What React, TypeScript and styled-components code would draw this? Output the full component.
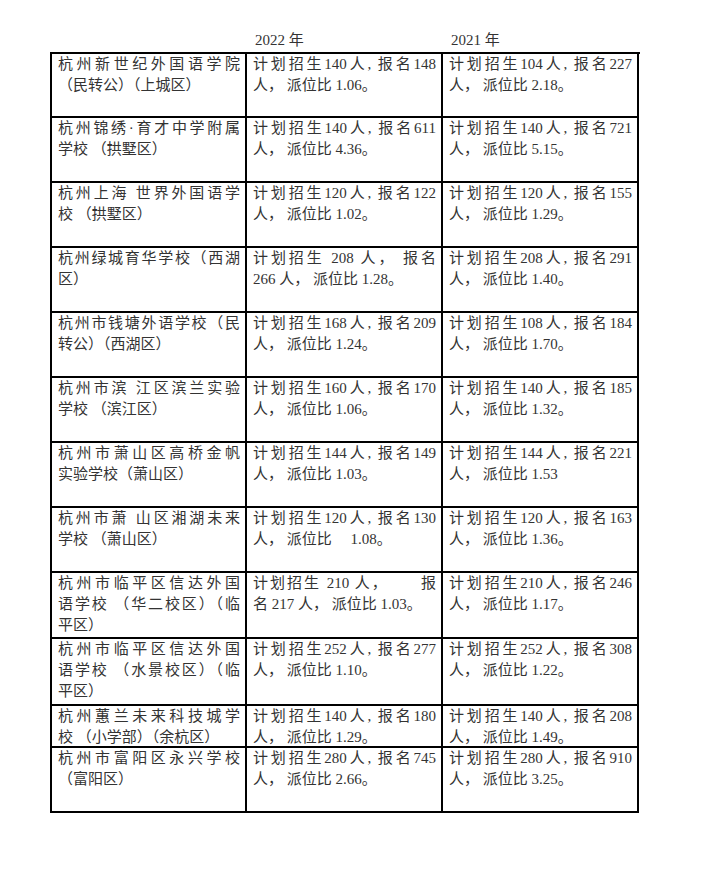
import styled, { createGlobalStyle } from 'styled-components'

const GlobalStyle = createGlobalStyle`
  html, body {
    margin: 0;
    padding: 0;
    background: #FFF;
  }

  body {
    color: #333;
    font-family: "Liberation Serif", "Noto Sans CJK SC", serif;
  }
`

const Page = styled.main`
  padding: 29px 0 0 50px;
  width: 590px;
`

const HeaderRow = styled.div`
  display: grid;
  grid-template-columns: 195px 196px 196px;
  height: 23px;
`

const HeaderCell = styled.div`
  font-size: 15px;
  line-height: 23px;
  padding-left: 10px;
`

const Grid = styled.div`
  border-left: 2px solid #000;
  border-top: 2px solid #000;
  display: grid;
  grid-template-columns: 195px 196px 196px;
`

const Cell = styled.div<{ $h: number }>`
  border-bottom: 2px solid #000;
  border-right: 2px solid #000;
  box-sizing: border-box;
  font-size: 15px;
  height: ${p => p.$h}px;
  line-height: 21px;
  overflow: hidden;
  padding: 0 5px 0 6px;
`

const Line = styled.div<{ $full?: boolean }>`
  text-align: ${p => (p.$full ? 'justify' : 'left')};
  text-align-last: ${p => (p.$full ? 'justify' : 'left')};
  white-space: nowrap;
`

type Row = {
  h: number
  cells: string[][]
}

const rows: Row[] = [
  {
    h: 64,
    cells: [
      ['杭州新世纪外国语学院', '（民转公）（上城区）'],
      ['计划招生140人, 报名148', '人， 派位比 1.06。'],
      ['计划招生104人, 报名227', '人， 派位比 2.18。']
    ]
  },
  {
    h: 65,
    cells: [
      ['杭州锦绣·育才中学附属', '学校 （拱墅区）'],
      ['计划招生140人, 报名611', '人， 派位比 4.36。'],
      ['计划招生140人, 报名721', '人， 派位比 5.15。']
    ]
  },
  {
    h: 65,
    cells: [
      ['杭州上海 世界外国语学', '校 （拱墅区）'],
      ['计划招生120人, 报名122', '人， 派位比 1.02。'],
      ['计划招生120人, 报名155', '人， 派位比 1.29。']
    ]
  },
  {
    h: 65,
    cells: [
      ['杭州绿城育华学校（西湖', '区）'],
      ['计划招生 208 人， 报名', '266 人， 派位比 1.28。'],
      ['计划招生208人, 报名291', '人， 派位比 1.40。']
    ]
  },
  {
    h: 65,
    cells: [
      ['杭州市钱塘外语学校（民', '转公）（西湖区）'],
      ['计划招生168人, 报名209', '人， 派位比 1.24。'],
      ['计划招生108人, 报名184', '人， 派位比 1.70。']
    ]
  },
  {
    h: 65,
    cells: [
      ['杭州市滨 江区滨兰实验', '学校 （滨江区）'],
      ['计划招生160人, 报名170', '人， 派位比 1.06。'],
      ['计划招生140人, 报名185', '人， 派位比 1.32。']
    ]
  },
  {
    h: 65,
    cells: [
      ['杭州市萧山区高桥金帆', '实验学校（萧山区）'],
      ['计划招生144人, 报名149', '人， 派位比 1.03。'],
      ['计划招生144人, 报名221', '人， 派位比 1.53']
    ]
  },
  {
    h: 65,
    cells: [
      ['杭州市萧 山区湘湖未来', '学校 （萧山区）'],
      ['计划招生120人, 报名130', '人， 派位比　 1.08。'],
      ['计划招生120人, 报名163', '人， 派位比 1.36。']
    ]
  },
  {
    h: 66,
    cells: [
      ['杭州市临平区信达外国', '语学校 （华二校区）（临', '平区）'],
      ['计划招生 210 人，　　 报', '名 217 人， 派位比 1.03。'],
      ['计划招生210人, 报名246', '人， 派位比 1.17。']
    ]
  },
  {
    h: 67,
    cells: [
      ['杭州市临平区信达外国', '语学校 （水景校区）（临', '平区）'],
      ['计划招生252人, 报名277', '人， 派位比 1.10。'],
      ['计划招生252人, 报名308', '人， 派位比 1.22。']
    ]
  },
  {
    h: 42,
    cells: [
      ['杭州蕙兰未来科技城学', '校 （小学部）（余杭区）'],
      ['计划招生140人, 报名180', '人， 派位比 1.29。'],
      ['计划招生140人, 报名208', '人， 派位比 1.49。']
    ]
  },
  {
    h: 65,
    cells: [
      ['杭州市富阳区永兴学校', '（富阳区）'],
      ['计划招生280人, 报名745', '人， 派位比 2.66。'],
      ['计划招生280人, 报名910', '人， 派位比 3.25。']
    ]
  }
]

export default function App (): JSX.Element {
  return (
    <>
      <GlobalStyle />
      <Page>
        <HeaderRow>
          <HeaderCell />
          <HeaderCell>2022 年</HeaderCell>
          <HeaderCell>2021 年</HeaderCell>
        </HeaderRow>
        <Grid>
          {rows.map((row, r) =>
            row.cells.map((lines, c) => (
              <Cell key={`${r}-${c}`} $h={row.h}>
                {lines.map((text, i) => (
                  // every line but the last is spread over the full width
                  <Line key={i} $full={i < lines.length - 1}>{text}</Line>
                ))}
              </Cell>
            ))
          )}
        </Grid>
      </Page>
    </>
  )
}
